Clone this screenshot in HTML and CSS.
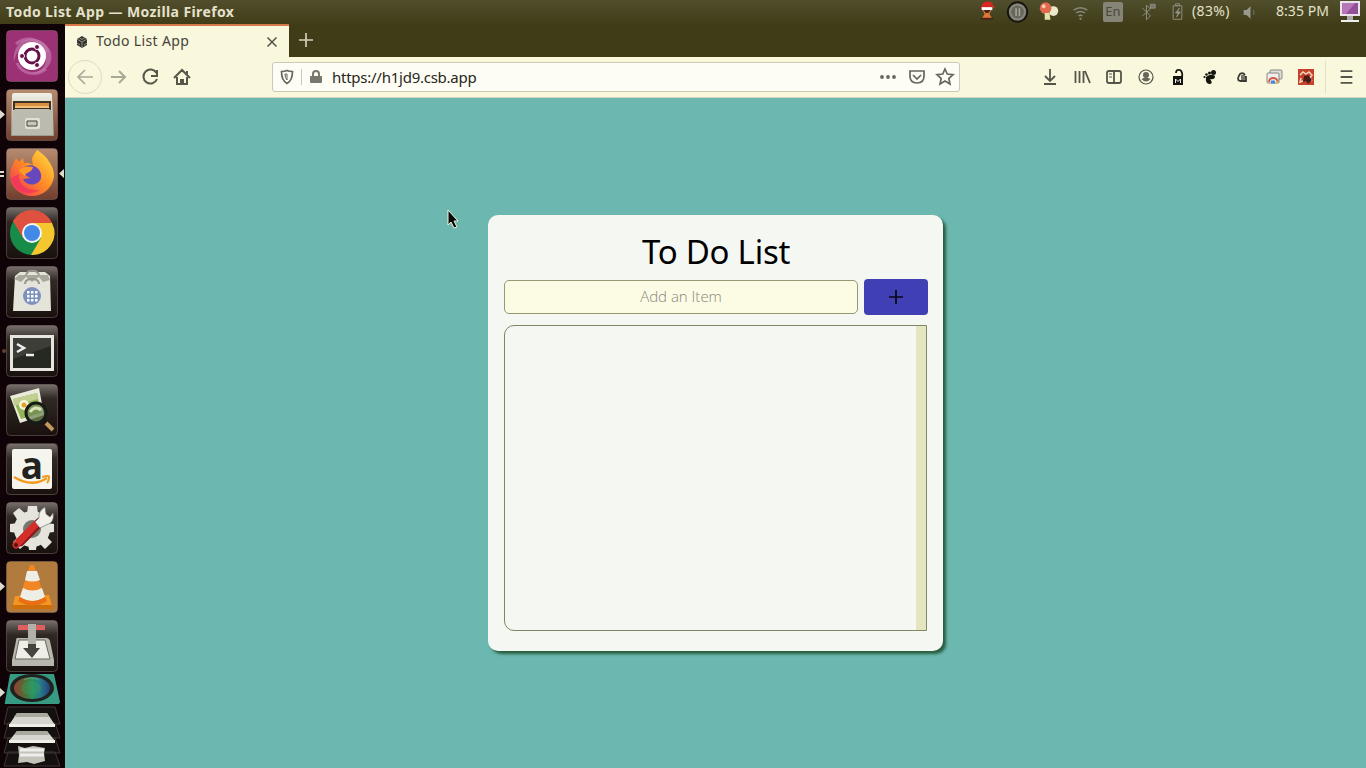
FILE: index.html
```html
<!DOCTYPE html>
<html lang="en">
<head>
<meta charset="utf-8">
<title>Todo List App</title>
<link rel="stylesheet" href="styles.css">
</head>
<body>
<div class="desktop">
  <header class="panel">
    <span class="window-title">Todo List App — Mozilla Firefox</span>
    <div class="tray">
      <svg class="slot" viewBox="0 0 32 24"><path d="M9 8Q11-1 20 2l4 6-3-1-1-2-1 4H10z" fill="#d82820"/><path d="M10 7h11v3H10z" fill="#fff"/><path d="M11 10h9l-2 4 3 5H10l3-5z" fill="#e07838"/><path d="M12 10h7l-2 3h-3zM9 18h13v2H9z" fill="#4a2418"/></svg>
      <svg class="slot" viewBox="0 0 32 24"><circle cx="15" cy="12" r="10" fill="#858579" stroke="#151511" stroke-width="2"/><circle cx="15" cy="12" r="6.500" fill="#67675d"/><path d="M13.500 8v8M17 8v8" stroke="#aaa99f" stroke-width="1.500"/></svg>
      <svg class="slot" viewBox="0 0 32 24"><circle cx="20" cy="11" r="5" fill="#ebe9c9"/><circle cx="12" cy="8" r="6" fill="#de694c"/><circle cx="10" cy="6" r="2" fill="#ffc7b0"/><path d="M11 13h5l1 7h-6z" fill="#e6dfaa"/></svg>
      <svg class="slot wifi" viewBox="0 0 32 24"><path d="M9 10q7-5 14 0M11.500 13q4.500-3 9 0M14 16q2-1.500 4 0" fill="none"/><path d="M15 18h2v2h-2z" fill="#8c8c80" stroke="none"/></svg>
      <span class="slot lang"><b>En</b></span>
      <svg class="slot line" viewBox="0 0 32 24"><path d="m13 8 8 8-4 4V5l4 4-8 7"/><path d="M21 4h5v4h-5z" fill="#77776c"/></svg>
      <svg class="slot line" viewBox="0 0 32 24"><path d="M12.500 5.500h9v14h-9zM15 3.500h4v2h-4z"/><path d="m19 8-4 5h3l-2 4 4-5h-3z" fill="#aaa"/></svg>
      <span class="battery">(83%)</span>
      <svg class="slot volume" viewBox="0 0 32 24"><path d="M10 10h3l4-4v13l-4-4h-3z" fill="#99998e"/><path d="M20 10q1.500 2 0 5" fill="none" stroke="#77776c"/></svg>
      <span class="clock">8:35 PM</span>
      <svg class="screen" viewBox="0 0 22 24"><path d="M1 1h20v15H1z" fill="#e9e4e9"/><path d="M3 3h16v11H3z" fill="#935099"/><path d="M3 3h13L7 14H3z" fill="#b676b7"/><path d="M8 16h6v4H8z" fill="#aaa"/><path d="M2 20h18v2H2z" fill="#eee"/></svg>
    </div>
  </header>

  <nav class="launcher">
    <svg class="tile" viewBox="0 0 52 52"><defs><linearGradient id="dark" x2="0" y2="1"><stop stop-color="#77706d"/><stop offset=".28" stop-color="#302823"/><stop offset="1" stop-color="#18110e"/></linearGradient><linearGradient id="brown" x2="0" y2="1"><stop stop-color="#b68c71"/><stop offset="1" stop-color="#713f2d"/></linearGradient><linearGradient id="metal" x2="0" y2="1"><stop stop-color="#f1f0e6"/><stop offset="1" stop-color="#9b9c90"/></linearGradient><linearGradient id="fox" x1="1" x2="0" y2="1"><stop stop-color="#ffe640"/><stop offset=".5" stop-color="#ff8826"/><stop offset="1" stop-color="#ed2864"/></linearGradient><linearGradient id="spectrum"><stop stop-color="#93402f"/><stop offset=".3" stop-color="#516c35"/><stop offset=".5" stop-color="#29935b"/><stop offset=".72" stop-color="#277c88"/><stop offset="1" stop-color="#253f80"/></linearGradient></defs><rect class="edge" x=".5" y=".5" width="51" height="51" rx="4" fill="#9c3275"/><path d="M8 32C5 8 32 0 44 20c6 15-8 24-17 23C48 39 41 13 25 13 15 14 10 22 8 32z" fill="#c57cad" opacity=".65"/><path d="M10 14c12-10 28-3 32 8M11 33c5 11 18 14 29 6" fill="none" stroke="#ca80b5" opacity=".6" stroke-width="3"/><circle cx="26" cy="26" r="14" fill="#fff"/><circle cx="26" cy="26" r="7" fill="none" stroke="#651048" stroke-width="3"/><g fill="#651048" stroke="#fff"><circle cx="16" cy="26" r="2.500"/><circle cx="31" cy="17" r="2.500"/><circle cx="31" cy="35" r="2.500"/></g></svg>

    <svg class="tile running" viewBox="0 0 52 52"><rect class="edge" x=".5" y=".5" width="51" height="51" rx="4" fill="url(#brown)"/><path d="M8 4h36q2 0 2 3l2 40H5L6 7q0-3 2-3z" fill="url(#metal)"/><path d="M7 12h38v9H7z" fill="#40301f"/><path d="M9 14h34v3H9z" fill="#d88d41"/><path d="M9 17h34v2H9z" fill="#f1c17b"/><path d="M9 20h34l3 2 1 24H6l1-24z" fill="#bbbcaf"/><rect x="19" y="29" width="15" height="11" rx="2" fill="#e1e1d5"/><path d="M21 32h10v5H21z" fill="#c8c8b9" stroke="#444"/></svg>

    <svg class="tile" viewBox="0 0 52 52"><rect class="edge" x=".5" y=".5" width="51" height="51" rx="4" fill="url(#brown)"/><path d="M31 2c9 5 18 17 17 27-2 12-12 19-22 19S5 41 4 28c0-8 4-13 6-18l3 4 4-4 1 5c4-1 8 1 9 3l-1-7c1-4 3-6 5-9z" fill="url(#fox)"/><path d="M5 30c4 15 18 18 29 12C20 43 12 36 13 26z" fill="#ee2c64" opacity=".65"/><path d="M17 20c8-7 20 1 18 10-2 8-14 9-18 1l8-1c-4-1-7-3-8-10z" fill="#6647bd"/><path d="M13 23c3-5 8-5 14-4-1 6-8 5-8 9z" fill="#ff9928"/></svg>

    <svg class="tile" viewBox="0 0 52 52"><rect id="tile-dark" class="edge" x=".5" y=".5" width="51" height="51" rx="4" fill="url(#dark)"/><circle cx="26" cy="26" r="22" fill="#168c48"/><path d="M26 26 7 14A22 22 0 0 1 46 16H26z" fill="#e04f3d"/><path d="M26 16h20A22 22 0 0 1 25 48l10-17z" fill="#f4c72f"/><path d="m7 14 10 17 9-15h20A22 22 0 0 0 7 14z" fill="#df503f"/><circle cx="26" cy="26" r="10" fill="#f7f6ef"/><circle cx="26" cy="26" r="8" fill="#4389e8"/></svg>

    <svg class="tile" viewBox="0 0 52 52"><use href="#tile-dark"/><path d="m9 10 5-4h25l5 4 1 35H7z" fill="#e5e4da"/><path d="m8 13 7 3 5-5 6 5 7-5 4 5 7-2-2-5H13z" fill="#a9a89d"/><path d="M19 18q0-5 7-5t7 5M20 9q2-5 6-4 5-1 7 4" fill="none" stroke="#969589" stroke-width="2"/><circle cx="26" cy="30" r="9" fill="#7c91bd"/><path d="M21 25h2.500v2.500H21zm4 0h2.500v2.500H25zm4 0h2.500v2.500H29zm-8 4h2.500v2.500H21zm4 0h2.500v2.500H25zm4 0h2.500v2.500H29zm-8 4h2.500v2.500H21zm4 0h2.500v2.500H25zm4 0h2.500v2.500H29z" fill="#fff"/></svg>

    <svg class="tile" viewBox="0 0 52 52"><use href="#tile-dark"/><path d="M4 10h44v36H4z" fill="#e6e6df"/><path d="M7 13h38v30H7z" fill="#262822"/><path d="M7 13h38v8L7 34z" fill="#3c3e37"/><path d="m11 19 7 4-7 4M20 30h8" fill="none" stroke="#eee" stroke-width="2.500"/></svg>

    <svg class="tile" viewBox="0 0 52 52"><use href="#tile-dark"/><path d="m4 12 29-8 5 27-24 8z" fill="#ebebdb"/><path d="m7 15 24-6 4 20-20 6z" fill="#91b553"/><path d="m7 15 24-6 1 6-24 7z" fill="#c1cf91"/><circle cx="18" cy="21" r="5" fill="#f8f6d8"/><circle cx="18" cy="21" r="2.500" fill="#e5a22b"/><circle cx="30" cy="29" r="10" fill="#708855" fill-opacity=".75" stroke="#161b15" stroke-width="3"/><path d="M24 28q5-7 11-2" fill="none" stroke="#dce3b8" stroke-width="3"/><path d="m37 36 4 4" stroke="#161815" stroke-width="5"/><path d="m40 39 7 7" stroke="#c5995e" stroke-width="4"/></svg>

    <div class="tile store"><span class="letter">a</span><svg class="smile" viewBox="0 0 52 52"><path d="M8 34q18 11 33 1" fill="none" stroke="#f09b20" stroke-width="2.500"/><path d="M36 34q8-2 7 0 0 4-2 6" fill="none" stroke="#f09b20" stroke-width="2"/></svg></div>

    <svg class="tile" viewBox="0 0 52 52"><use href="#tile-dark"/><g fill="#e4e4dc"><circle cx="26" cy="27" r="18"/><path d="M22 4h9l1 8H21zM22 40h9l-1 8h-7zM4 22l8-1v10l-8-1zM40 21l8 1v8l-8 1zM7 11l6-5 7 6-8 7zM12 35l8 7-6 5-7-7zM41 35l5 5-7 7-6-6z"/></g><circle cx="26" cy="27" r="9" fill="#77776e"/><path d="M14 40 34 20" stroke="#881b19" stroke-width="9" stroke-linecap="round"/><path d="m10 43 19-20" stroke="#d52e29" stroke-width="7" stroke-linecap="round"/><path d="m29 20 4-4q-1-7 6-11l1 7 4 3 3-4q2 10-7 12l-6 3z" fill="#f1f0e8" stroke="#777" stroke-width=".7"/><circle cx="10" cy="43" r="2" fill="#501410"/></svg>

    <svg class="tile running" viewBox="0 0 52 52"><rect class="edge" x=".5" y=".5" width="51" height="51" rx="4" fill="#b07b3c"/><path d="m9 35 34-1 4 14H6z" fill="#f49620"/><path d="M6 44h41v4H6z" fill="#cf6f0b"/><path d="M24 4h4l11 34q-13 8-26 0z" fill="#f08724"/><path d="m21 10 10 0 3 9q-8 3-15 0zM17 27q9 5 19 0l3 9q-13 8-25 0z" fill="#eeeee6"/><path d="M14 36q12 8 25 0l2 4q-14 9-29 0z" fill="#e96f16"/></svg>

    <svg class="tile" viewBox="0 0 52 52"><use href="#tile-dark"/><path d="M12 5h27v5H12z" fill="#df5e5f"/><path d="M11 18h29q3 0 4 3l4 19v6H6v-6l4-19q0-3 1-3z" fill="#b7b7ad"/><path d="m13 20 26 0 5 19H9z" fill="#efefe7" stroke="#67675f"/><path d="M22 4h8v24h4l-8 10-9-10h5z" fill="#44453f"/><path d="M22 4h8v20h-8z" fill="#b1b1a8"/></svg>

    <svg class="folded" viewBox="0 0 65 97"><path d="M10 1h44l6 28q0 2-2 2H6q-2 0-1-2z" fill="#379b83"/><ellipse cx="32" cy="15" rx="22" ry="14" fill="#20221f"/><ellipse cx="32" cy="15" rx="18" ry="11" fill="url(#spectrum)"/><ellipse cx="31" cy="15" rx="10" ry="7" fill="#36a463" opacity=".35"/><path d="M24 7q8-4 15 0" fill="none" stroke="#8ca8a0" opacity=".6"/><g fill="#14100f" stroke="#3c3733"><path d="M8 34h47l5 17H4zM8 50h47l5 15H4zM8 65h47l5 15H4zM8 79h47l5 14H4z"/></g><path d="M17 40h30l8 12H9zM17 58h30l8 10H9z" fill="#d6d6ce"/><path d="M17 40h30l2 4H14zM17 58h30l2 4H14z" fill="#aaa9a0"/><path d="M9 51h46v3H9zM9 67h46v3H9z" fill="#efefe7"/><path d="m18 73 7 2 8-2 12 2-1 5 1 8-11 3-7-2-9 1 1-8z" fill="#c3c3b9"/><path d="M20 82h24M20 77h24" stroke="#eee" stroke-width="3"/></svg>

    <svg class="marks" viewBox="0 0 65 744"><path d="M0 86 5 90.500 0 95zM0 558l5 4.500-5 4.500zM0 664l5 4.500-5 4.500zM0 147h4v2H0zm0 4h4v2H0zM64 145l-5 4.500 5 4.500z" fill="#dedbd0"/><circle cx="4" cy="327" r="2" fill="#64402e"/></svg>
  </nav>

  <main class="browser">
    <div class="tabs">
      <div class="tab">
        <svg class="favicon" viewBox="0 0 14 14"><path d="m7 1 5 3v6l-5 3-5-3V4z" fill="#34342d"/><path d="m2 4 5 3 5-3M7 7v6M4 2.500l3 2 3-2M2 8l3 2M12 8l-3 2" fill="none" stroke="#a5a497" stroke-width=".8"/></svg>
        <span class="tab-name">Todo List App</span>
        <svg class="close" viewBox="0 0 12 12"><path d="m1.500 1.500 9 9m0-9-9 9"/></svg>
      </div>
      <svg class="new-tab" viewBox="0 0 16 16"><path d="M8 1v14M1 8h14"/></svg>
    </div>

    <div class="toolbar">
      <div class="nav-icons">
        <svg class="back" viewBox="0 0 36 36"><circle cx="18" cy="18" r="16.500"/><path d="M26 18H11m7-7-7 7 7 7"/></svg>
        <svg class="nav-icon forward" viewBox="0 0 32 32"><path d="M9 16h14m-6-6 6 6-6 6"/></svg>
        <svg class="nav-icon" viewBox="0 0 32 32"><path d="M22.500 12a7 7 0 1 0 .5 6M23 9v6h-6"/></svg>
        <svg class="nav-icon" viewBox="0 0 32 32"><path d="m8 17 8-8 8 8M11 16v7h10v-7M15 23v-4h2v4M21 10v4"/></svg>
      </div>
      <div class="address">
        <svg class="shield" viewBox="0 0 14 16"><path d="M1.500 2.500Q5 2.500 7 1.500q2 1 5.500 1 0 9-5.500 12-5.500-3-5.500-12z"/><path d="M7 5v6Q5 9 5 5z" stroke-width="1"/></svg>
        <svg class="lock" viewBox="0 0 12 16"><path d="M3 7V5q0-3 3-3t3 3v2" fill="none" stroke="#77776b" stroke-width="2"/><rect y="7" width="12" height="7" rx="1" fill="#77776b"/></svg>
        <span class="url">https://h1jd9.csb.app</span>
        <svg class="address-tools" viewBox="0 0 78 20"><g fill="#66665b" stroke="none"><circle cx="5" cy="10" r="1.900"/><circle cx="11" cy="10" r="1.900"/><circle cx="17" cy="10" r="1.900"/></g><path d="M33 4h14v5q0 7-7 7t-7-7zM36 8l4 4 4-4M68 2l2.300 5 5.700.700-4.200 3.800 1.200 5.500-5-2.900-5 2.900 1.200-5.500L60 7.700l5.700-.700z"/></svg>
      </div>
      <div class="extensions">
        <svg viewBox="0 0 32 32"><path d="M16 8v12m-5-5 5 5 5-5M10 23h12"/></svg>
        <svg viewBox="0 0 32 32"><path d="M9.500 10v12m4-12v12m4-12v12M19 10l5 12"/></svg>
        <svg viewBox="0 0 32 32"><rect x="9" y="10" width="14" height="12" rx="2"/><path d="M16 10v12"/><path d="M11 13h3m-3 3h3" stroke-width="1"/></svg>
        <svg viewBox="0 0 32 32"><circle cx="16" cy="16" r="7" stroke-width="1.200"/><circle cx="16" cy="14" r="3" fill="#66665b" stroke="none"/><path d="M11.500 18q4.500-3 9 0-4.500 5-9 0z" fill="#66665b" stroke="none"/></svg>
        <svg viewBox="0 0 32 32"><path d="M14 12q0-4 4-3 3 2 2 7" stroke="#15150f"/><path d="M11 15h10v9H11z" fill="#15150f" stroke="none"/><path d="M13.500 22v-4l2.500 2.500 2.500-2.500v4" stroke="#eee" stroke-width="1"/></svg>
        <svg viewBox="0 0 32 32"><path d="M12 16q5-4 9-1 0 4-5 3 4 5-1 5-4-1-3-7z" fill="#15150f" stroke="none"/><g fill="#15150f" stroke="none"><ellipse cx="19.500" cy="11.500" rx="2.500" ry="2.500"/><circle cx="15.500" cy="12" r="1.500"/><circle cx="12.500" cy="13.500" r="1.300"/><circle cx="10.500" cy="16" r="1.100"/></g></svg>
        <svg viewBox="0 0 32 32"><path d="M19 14q-2-3-5-1-4 6 0 7h6v-4h-5" stroke="#3b3b34"/><path d="M15 14h4v5h-4z" fill="#77776e" stroke="none"/></svg>
        <svg viewBox="0 0 32 32"><rect x="12" y="9" width="12" height="9" rx="1" fill="#ddd" stroke="#88887e" stroke-width="1"/><rect x="9" y="12" width="12" height="10" rx="1" fill="#eee" stroke="#88887e" stroke-width="1"/><path d="M11 21q0-4 4-4 4 0 5 4" stroke="#d85742"/><path d="M13 21h4" stroke="#4685db" stroke-width="3"/><path d="M18 21h2" stroke="#e3b43b"/></svg>
        <svg viewBox="0 0 32 32"><path d="M8 8h16v16H8z" fill="#c6412b" stroke="none"/><path d="m10 14 3-3 3 2 3-2 3 3-2 3 2 3M11 17l-1 4 3-1" stroke="#f3d4bd" stroke-width="1.500"/><path d="m14 15 4-1 4 5-4 4-2-3-3 1z" fill="#4b1b15" stroke="none"/></svg>
        <svg class="menu" viewBox="0 0 40 32"><path d="M15 10h12M15 16h12M15 22h12"/></svg>
      </div>
    </div>

    <div class="page">
      <section class="card">
        <h1>To Do List</h1>
        <div class="entry">
          <input type="text" placeholder="Add an Item">
          <button aria-label="Add"><svg viewBox="0 0 14 14"><path d="M7 0v14M0 7h14"/></svg></button>
        </div>
        <div class="list"><div class="scroll-track"></div></div>
      </section>
    </div>
  </main>
  <svg class="pointer" viewBox="0 0 12 20"><path d="M1 1v15l3-3 3 6 3-1-3-6h4z" fill="#080808" stroke="#f4f4dc"/></svg>
</div>
</body>
</html>
```
FILE: styles.css
```css
* { box-sizing: border-box; }
body { margin: 0; font-family: "Noto Sans", sans-serif; }
svg { display: block; flex-shrink: 0; }
.desktop { width: 1366px; height: 768px; overflow: hidden; position: relative; display: grid; grid-template: 24px 744px / 65px 1301px; background: #403d25; }
.panel { grid-column: 1 / 3; display: flex; justify-content: space-between; align-items: center; padding: 0 5px 0 6px; background: linear-gradient(#504e2c, #403d18); color: #e5e0cb; }
.window-title { font-size: 14px; font-weight: 700; line-height: 24px; letter-spacing: .4px; }
.tray { display: flex; align-items: center; font-size: 14px; line-height: 22px; }
.slot { width: 31px; height: 24px; }
.wifi { fill: none; stroke: #8c8c80; stroke-width: 1.500; }
.lang { display: flex; align-items: center; justify-content: center; width: 34px; }
.lang b { width: 20px; height: 20px; border-radius: 2px; background: #858477; color: #4b4937; font-size: 13px; font-weight: 400; line-height: 19px; text-align: center; }
.line { fill: none; stroke: #8f8e81; }
.battery { width: 41px; height: 24px; letter-spacing: .35px; }
.volume { margin-left: 1px; }
.clock { margin-left: 11px; width: 63px; height: 24px; letter-spacing: .05px; white-space: nowrap; }
.screen { width: 22px; height: 24px; }

.launcher { position: relative; display: flex; flex-direction: column; gap: 7px; align-items: center; padding: 6px 2px 0 1px; background: #100307; overflow: hidden; }
.tile { width: 52px; height: 52px; flex-shrink: 0; }
.edge { stroke: #8b7972; stroke-opacity: .45; }
.store { display: grid; justify-items: center; border: 1px solid #4b403b; border-radius: 4px; background: linear-gradient(#77706d, #302823 28%, #18110e); }
.store > * { grid-area: 1 / 1; }
.store::before { content: ""; grid-area: 1 / 1; width: 40px; height: 40px; margin-top: 5px; border-radius: 2px; background: #f6f5ed; }
.letter { z-index: 1; height: 50px; font: 700 37px/42px "Open Sans", sans-serif; color: #22231f; }
.smile { z-index: 1; width: 52px; height: 52px; margin: -1px; }
.folded { width: 65px; height: 97px; margin-top: -6px; }
.marks { position: absolute; inset: 0; width: 65px; height: 744px; }

.browser { display: grid; grid-template-rows: 33px 41px 670px; }
.tabs { display: flex; align-items: center; background: #403c18; }
.tab { display: flex; align-items: center; width: 224px; height: 33px; padding: 0 11px 0 10px; border-top: 2px solid #d77a4a; background: #f9f7dc; color: #45443b; }
.favicon { width: 14px; height: 14px; }
.tab-name { margin-left: 7px; margin-top: -2px; font-size: 14px; letter-spacing: .37px; flex: 1; }
.close { width: 12px; height: 12px; fill: none; stroke: #55544a; stroke-width: 1.500; }
.new-tab { width: 16px; height: 16px; margin-left: 9px; margin-top: -2px; fill: none; stroke: #d2cebd; stroke-width: 1.700; }
.toolbar { display: flex; align-items: center; padding: 0 0 0 2px; background: #f9f7dc; border-bottom: 1px solid #d2d4bd; }
.nav-icons { display: flex; align-items: center; width: 205px; }
.back { width: 36px; height: 36px; margin-right: -1px; fill: none; stroke: #aaa998; stroke-width: 1.700; }
.back circle { stroke: #dddbc5; stroke-width: 1; }
.nav-icon { width: 32px; height: 32px; fill: none; stroke: #57564b; stroke-width: 2; }
.forward { stroke: #aaa998; }
.address { display: flex; align-items: center; width: 688px; height: 30px; padding: 0 4px 0 7px; border: 1px solid #cccab4; border-radius: 3px; background: #fdfdf5; }
.shield { width: 14px; height: 16px; margin-right: 7px; fill: none; stroke: #68675c; stroke-width: 1.700; }
.lock { box-sizing: content-box; width: 12px; height: 16px; padding-left: 8px; border-left: 1px solid #cccab7; }
.url { flex: 1; margin-left: 10px; font-size: 15px; letter-spacing: -.25px; color: #272720; }
.address-tools { width: 78px; height: 20px; fill: none; stroke: #66665b; stroke-width: 1.700; }
.extensions { display: flex; margin-left: 74px; }
.extensions svg { width: 32px; height: 32px; fill: none; stroke: #55544a; stroke-width: 1.800; }
.extensions .menu { width: 40px; margin-left: 3px; border-left: 1px solid #e3e0c8; }

.page { display: flex; align-items: flex-start; justify-content: center; padding-top: 117px; background: #6cb8b0; }
.card { width: 455px; height: 436px; padding: 16px 15px 20px 16px; border-radius: 10px; background: #f5f7f3; box-shadow: 3px 3px 3px #285e40; }
h1 { margin: 0; height: 48px; line-height: 42px; font-size: 33px; font-weight: 400; text-align: center; letter-spacing: -.25px; }
.entry { display: flex; align-items: center; gap: 6px; height: 36px; }
input { width: 354px; height: 34px; padding: 0 0 2px; border: 1px solid #969a74; border-radius: 5px; background: #fcfbe4; text-align: center; font: 300 15px "Open Sans", sans-serif; }
input::placeholder { color: #88877d; opacity: 1; }
button { display: grid; place-items: center; width: 64px; height: 36px; padding: 0; border: 0; border-radius: 4px; background: #403fb3; }
button svg { width: 14px; height: 14px; stroke: #080812; stroke-width: 1.700; }
.list { display: flex; justify-content: flex-end; width: 423px; height: 306px; margin-top: 10px; border: 1px solid #7d8963; border-radius: 10px 0 0 10px; }
.scroll-track { width: 10px; background: #e5e6c0; }
.pointer { position: absolute; left: 447px; top: 209px; width: 12px; height: 20px; }
```
